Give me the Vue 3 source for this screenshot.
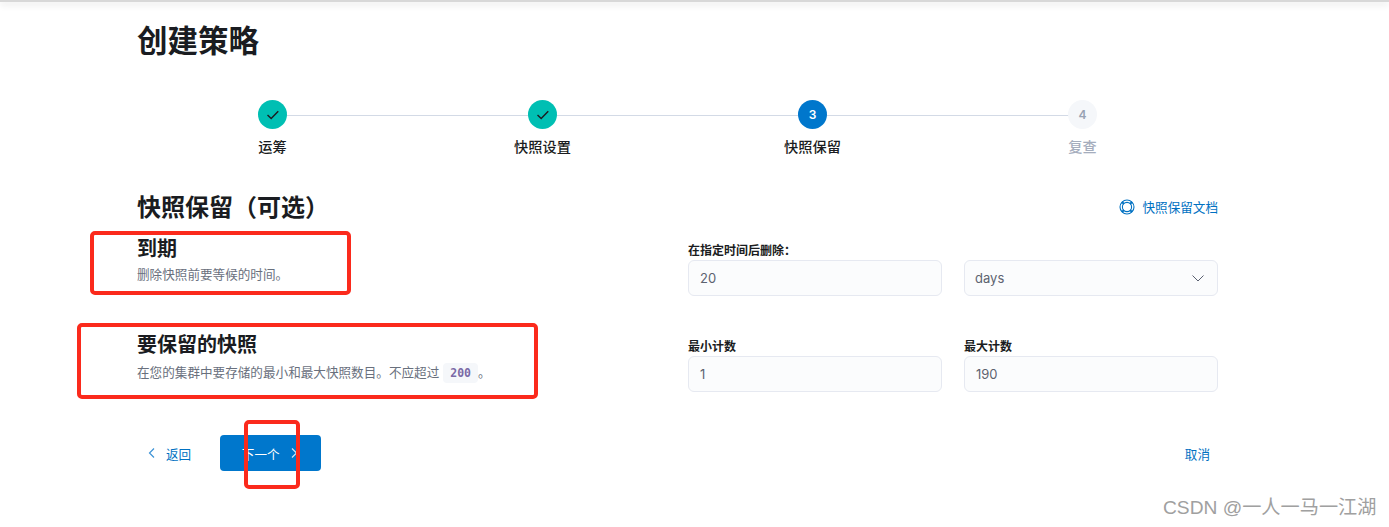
<template>
  <div class="page">
    <div class="topbar"></div>
    <main class="content">
      <h1 class="title">创建策略</h1>

      <ol class="steps">
        <li v-for="(s, i) in steps" :key="s.label" class="step" :class="s.state">
          <span v-if="i < steps.length - 1" class="connector"></span>
          <span class="dot">
            <svg v-if="s.state === 'done'" width="16" height="16" viewBox="0 0 14 14" fill="none">
              <path d="M2.2 7 5.4 10 11.6 3.8" stroke="#1a1c21" stroke-width="1.3" />
            </svg>
            <template v-else>{{ i + 1 }}</template>
          </span>
          <span class="step-label">{{ s.label }}</span>
        </li>
      </ol>

      <header class="section-head">
        <h2>快照保留（可选）</h2>
        <a class="doc-link">
          <svg width="16" height="16" viewBox="0 0 16 16" fill="none" stroke="#0071c2" stroke-width="1.1">
            <circle cx="8" cy="8" r="7" />
            <circle cx="8" cy="8" r="4.6" />
            <path d="M3 3l2 2M13 3l-2 2M3 13l2-2M13 13l-2-2" stroke-width="1.8" />
          </svg>
          快照保留文档
        </a>
      </header>

      <section class="row row-expire">
        <div class="intro">
          <h3>到期</h3>
          <p>删除快照前要等候的时间。</p>
        </div>
        <div class="fields">
          <div class="field">
            <label>在指定时间后删除：</label>
            <div class="input">20</div>
          </div>
          <div class="field">
            <label>&nbsp;</label>
            <div class="input select">
              days
              <svg width="14" height="14" viewBox="0 0 14 14" fill="none">
                <path d="M1.5 4.5 7 10l5.5-5.5" stroke="#5a6070" stroke-width="1" />
              </svg>
            </div>
          </div>
        </div>
      </section>

      <section class="row row-keep">
        <div class="intro">
          <h3>要保留的快照</h3>
          <p>在您的集群中要存储的最小和最大快照数目。不应超过<code>200</code>。</p>
        </div>
        <div class="fields">
          <div class="field">
            <label>最小计数</label>
            <div class="input">1</div>
          </div>
          <div class="field">
            <label>最大计数</label>
            <div class="input">190</div>
          </div>
        </div>
      </section>

      <footer class="actions">
        <div class="actions-left">
          <a class="back">
            <svg width="12" height="12" viewBox="0 0 12 12" fill="none">
              <path d="M8 1.5 3.5 6 8 10.5" stroke="#3d93d6" stroke-width="1.2" />
            </svg>
            返回
          </a>
          <button class="next">
            下一个
            <svg width="12" height="12" viewBox="0 0 12 12" fill="none">
              <path d="M4 1.5 8.5 6 4 10.5" stroke="#cfe4f5" stroke-width="1.2" />
            </svg>
          </button>
        </div>
        <a class="cancel">取消</a>
      </footer>
    </main>

    <span class="mark mark-1"></span>
    <span class="mark mark-2"></span>
    <span class="mark mark-3"></span>
    <span class="watermark">CSDN @一人一马一江湖</span>
  </div>
</template>

<script setup>
const steps = [
  { label: '运筹', state: 'done' },
  { label: '快照设置', state: 'done' },
  { label: '快照保留', state: 'current' },
  { label: '复查', state: 'todo' },
]
</script>

<style>
html, body { margin: 0; background: #fff; }
</style>

<style scoped>
.page {
  position: relative;
  height: 527px;
  overflow: hidden;
  background: #fff;
  font-family: Inter, "Noto Sans CJK SC", sans-serif;
  color: #1a1c21;
}
.topbar {
  height: 2px;
  background: #d8d8d8;
  box-shadow: 0 2px 7px rgba(0, 0, 0, 0.18);
}
.content {
  width: 1080px;
  margin-left: 138px;
}
.title {
  margin: 19px 0 0 -1px;
  font-size: 30.5px;
  line-height: 40px;
  font-weight: 700;
}
.steps {
  list-style: none;
  display: grid;
  grid-template-columns: repeat(4, 270px);
  margin: 39px 0 0;
  padding: 0;
}
.step {
  position: relative;
  display: flex;
  flex-direction: column;
  align-items: center;
}
.connector {
  position: absolute;
  left: 50%;
  width: 100%;
  top: 15px;
  height: 1px;
  background: #d3dae6;
}
.dot {
  position: relative;
  display: flex;
  align-items: center;
  justify-content: center;
  width: 29px;
  height: 29px;
  margin-left: -1px;
  border-radius: 50%;
  font-size: 12px;
  font-weight: 600;
}
.done .dot { background: #00bfb3; }
.current .dot { background: #0077cc; color: #fff; }
.todo .dot { background: #f5f7fa; color: #98a2b3; }
.step-label {
  margin-top: 8px;
  margin-left: -1px;
  font-size: 14.2px;
  line-height: 20px;
  font-weight: 500;
}
.todo .step-label { color: #a5adbd; }

.section-head {
  display: flex;
  justify-content: space-between;
  align-items: center;
  margin-top: 36px;
  height: 30px;
}
.section-head h2 {
  margin: 0 0 0 -1px;
  font-size: 24px;
  line-height: 30px;
  font-weight: 700;
}
.doc-link {
  display: flex;
  align-items: center;
  gap: 7px;
  margin-bottom: 3px;
  font-size: 12.6px;
  color: #0071c2;
}

.row {
  display: flex;
  justify-content: space-between;
}
.row-expire { margin-top: 14px; height: 60px; }
.row-keep { margin-top: 36px; }
.intro h3 {
  margin: 0 0 0 -1px;
  font-size: 20px;
  line-height: 24px;
  font-weight: 700;
}
.intro p {
  display: flex;
  align-items: center;
  margin: 4px 0 0 -1px;
  font-size: 12.6px;
  line-height: 20px;
  color: #69707d;
}
.row-keep .intro p { margin-top: 6px; }
code {
  margin: 0 0 0 4px;
  padding: 0 7px;
  border-radius: 4px;
  background: #f5f7fa;
  font-family: "DejaVu Sans Mono", monospace;
  font-size: 11.5px;
  font-weight: 700;
  color: #7a6aa6;
}
.fields {
  display: grid;
  grid-template-columns: 254px 254px;
  gap: 22px;
  width: 530px;
  padding-top: 6px;
}
.field label {
  display: block;
  font-size: 12px;
  line-height: 16px;
  font-weight: 600;
  margin-bottom: 1px;
}
.input {
  display: flex;
  align-items: center;
  justify-content: space-between;
  box-sizing: border-box;
  height: 36px;
  padding: 0 11px;
  background: #fbfcfd;
  border: 1px solid #e6e9f1;
  border-radius: 6px;
  font-size: 13px;
  color: #5d6370;
}
.select { padding-left: 10px; }
.select svg { margin-right: 1px; }

.actions {
  display: flex;
  justify-content: space-between;
  align-items: center;
  margin-top: 43px;
  height: 36px;
}
.actions-left {
  display: flex;
  align-items: center;
  gap: 29px;
}
.back {
  display: flex;
  align-items: center;
  gap: 8px;
  padding-left: 8px;
  font-size: 12.6px;
  color: #0071c2;
}
.next {
  display: flex;
  align-items: center;
  justify-content: center;
  gap: 8px;
  width: 101px;
  height: 36px;
  border: 0;
  border-radius: 4px;
  background: #0077cc;
  color: #fff;
  font: inherit;
  font-size: 12.6px;
}
.cancel {
  margin-right: 8px;
  font-size: 12.6px;
  color: #0071c2;
}

.mark {
  position: absolute;
  box-sizing: border-box;
  border: 4px solid #fb2a1c;
  border-radius: 5px;
}
.mark-1 { left: 90px; top: 231px; width: 261px; height: 64px; }
.mark-2 { left: 77px; top: 323px; width: 461px; height: 76px; }
.mark-3 { left: 244px; top: 420px; width: 56px; height: 69px; }
.watermark {
  position: absolute;
  left: 1163px;
  top: 496px;
  font-family: "Liberation Sans", "Noto Sans CJK SC", sans-serif;
  font-size: 19.2px;
  line-height: 24px;
  color: #a0a0a0;
  white-space: nowrap;
}
</style>
